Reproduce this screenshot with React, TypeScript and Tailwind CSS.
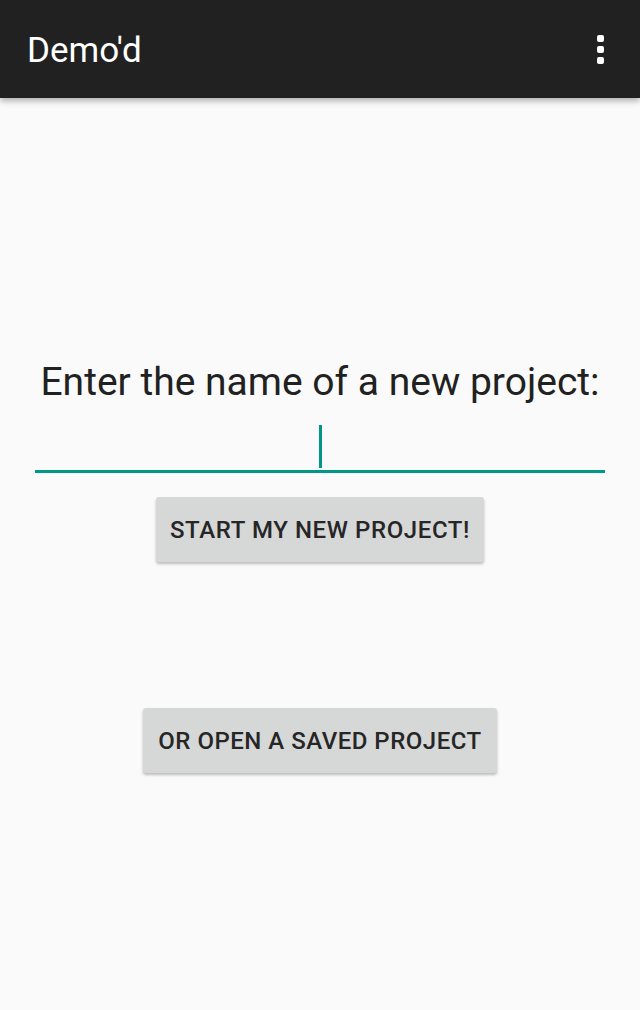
const App = () => {
    return (
        <div className="w-[640px] h-[1010px] bg-[#fafafa] font-['Roboto',sans-serif] flex flex-col overflow-hidden">
            <div className="h-[98px] bg-[#212121] flex flex-row items-center justify-between pl-[27px] pr-[36px] shadow-[0_3px_6px_rgba(0,0,0,0.3)] relative z-10">
                <h1 className="text-[35px] text-white leading-none mt-[2px]">Demo'd</h1>
                <div className="flex flex-col gap-[4px] items-center">
                    <span className="w-[7px] h-[7px] rounded-[2px] bg-white"></span>
                    <span className="w-[7px] h-[7px] rounded-[2px] bg-white"></span>
                    <span className="w-[7px] h-[7px] rounded-[2px] bg-white"></span>
                </div>
            </div>
            <div className="flex flex-col items-center">
                <p className="mt-[261px] text-[39px] leading-[46px] text-[#212121]">Enter the name of a new project:</p>
                <div className="mt-[17px] w-[570px] h-[51px] border-b-[3px] border-[#009688] flex flex-row justify-center items-end pb-[2px]">
                    <span className="w-[3px] h-[43px] bg-[#009688]"></span>
                </div>
                <button className="mt-[24px] h-[65px] px-[14px] rounded-[3px] bg-[#d6d7d7] shadow-[0_2px_3px_rgba(0,0,0,0.25)] text-[24px] font-medium text-[#262626] tracking-[0.6px]">START MY NEW PROJECT!</button>
                <button className="mt-[146px] h-[65px] px-[15px] rounded-[3px] bg-[#d6d7d7] shadow-[0_2px_3px_rgba(0,0,0,0.25)] text-[24px] font-medium text-[#262626] tracking-[0.5px]">OR OPEN A SAVED PROJECT</button>
            </div>
        </div>
    )
}

export default App;
